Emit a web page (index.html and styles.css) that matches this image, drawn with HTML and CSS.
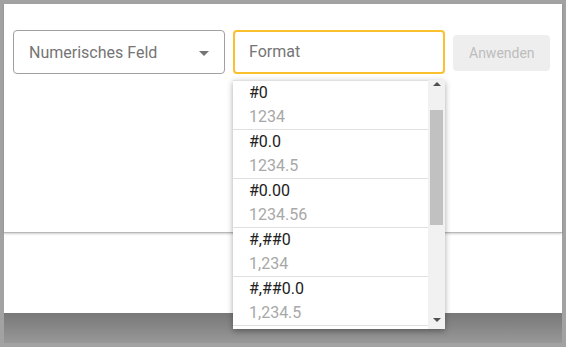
FILE: index.html
```html
<!DOCTYPE html>
<html lang="de">
<head>
    <meta charset="UTF-8">
    <meta name="viewport" content="width=device-width, initial-scale=1.0">
    <title>Format</title>
    <link rel="stylesheet" href="styles.css">
</head>
<body>
    <div class="screen">
        <!-- Dialog oben -->
        <div class="dialog">
            <div class="toolbar">
                <div class="select">
                    <span>Numerisches Feld</span>
                    <span class="caret"></span>
                </div>
                <div class="field">
                    <div class="input">Format</div>
                    <!-- Auswahlliste -->
                    <div class="menu">
                        <ul class="options">
                            <li><div class="pattern">#0</div><div class="sample">1234</div></li>
                            <li><div class="pattern">#0.0</div><div class="sample">1234.5</div></li>
                            <li><div class="pattern">#0.00</div><div class="sample">1234.56</div></li>
                            <li><div class="pattern">#,##0</div><div class="sample">1,234</div></li>
                            <li><div class="pattern">#,##0.0</div><div class="sample">1,234.5</div></li>
                            <li><div class="pattern">#,##0.00</div><div class="sample">1,234.56</div></li>
                        </ul>
                        <div class="scrollbar">
                            <span class="arrow up"></span>
                            <span class="thumb"></span>
                            <span class="arrow down"></span>
                        </div>
                    </div>
                </div>
                <button type="button" class="apply">Anwenden</button>
            </div>
        </div>
        <div class="below"></div>
        <div class="shade"></div>
    </div>
</body>
</html>
```

FILE: styles.css
```css
body {
    margin: 0;
    background: #a2a2a2;
    font-family: Roboto, "Liberation Sans", sans-serif;
}
.screen {
    padding: 4px;
    height: 339px;
}
.dialog {
    background: #fff;
    height: 228px;
    border-bottom: 1px solid #b8b8b8;
    box-shadow: 0 1px 2px rgba(0, 0, 0, 0.2);
    position: relative;
    z-index: 1;
}
.toolbar {
    display: flex;
    align-items: flex-start;
    gap: 8px;
    padding: 26px 0 0 9px;
}
.select {
    width: 212px;
    height: 44px;
    box-sizing: border-box;
    border: 1px solid #a0a0a0;
    border-radius: 4px;
    display: flex;
    align-items: center;
    justify-content: space-between;
    padding: 0 15px;
    font-size: 16px;
    color: #757575;
}
.caret {
    width: 0;
    height: 0;
    border-left: 5px solid transparent;
    border-right: 5px solid transparent;
    border-top: 5px solid #757575;
    margin-top: 2px;
}
.field {
    width: 212px;
    position: relative;
}
.input {
    height: 44px;
    box-sizing: border-box;
    border: 2px solid #fbc02d;
    border-radius: 4px;
    padding: 0 14px;
    line-height: 40px;
    font-size: 16px;
    color: #757575;
}
.menu {
    position: absolute;
    top: 50px;
    left: 0;
    width: 212px;
    height: 249px;
    background: #fff;
    display: flex;
    box-shadow: 0 2px 6px rgba(0, 0, 0, 0.35);
    z-index: 5;
}
.options {
    flex: 1;
    list-style: none;
    margin: 0;
    padding: 0;
    overflow: hidden;
}
.options li {
    border-top: 1px solid #e0e0e0;
    padding-left: 16px;
    font-size: 16px;
    line-height: 24px;
}
.pattern {
    color: #212121;
}
.sample {
    color: #a8a8a8;
}
.scrollbar {
    width: 17px;
    background: #f1f1f1;
    display: flex;
    flex-direction: column;
    align-items: center;
}
.arrow {
    width: 0;
    height: 0;
    border-left: 4px solid transparent;
    border-right: 4px solid transparent;
}
.arrow.up {
    border-bottom: 4px solid #505050;
    margin-top: 2px;
}
.arrow.down {
    border-top: 4px solid #505050;
    margin-top: auto;
    margin-bottom: 7px;
}
.thumb {
    width: 13px;
    height: 115px;
    background: #c1c1c1;
    margin-top: 24px;
}
.apply {
    margin-top: 5px;
    width: 97px;
    height: 36px;
    border: none;
    border-radius: 4px;
    background: #eeeeee;
    color: #bdbdbd;
    font-family: Roboto, "Liberation Sans", sans-serif;
    font-size: 14px;
    padding: 0 16px;
}
.below {
    background: #fff;
    height: 80px;
}
.shade {
    height: 30px;
    background: linear-gradient(#787878, #989898);
}
```
